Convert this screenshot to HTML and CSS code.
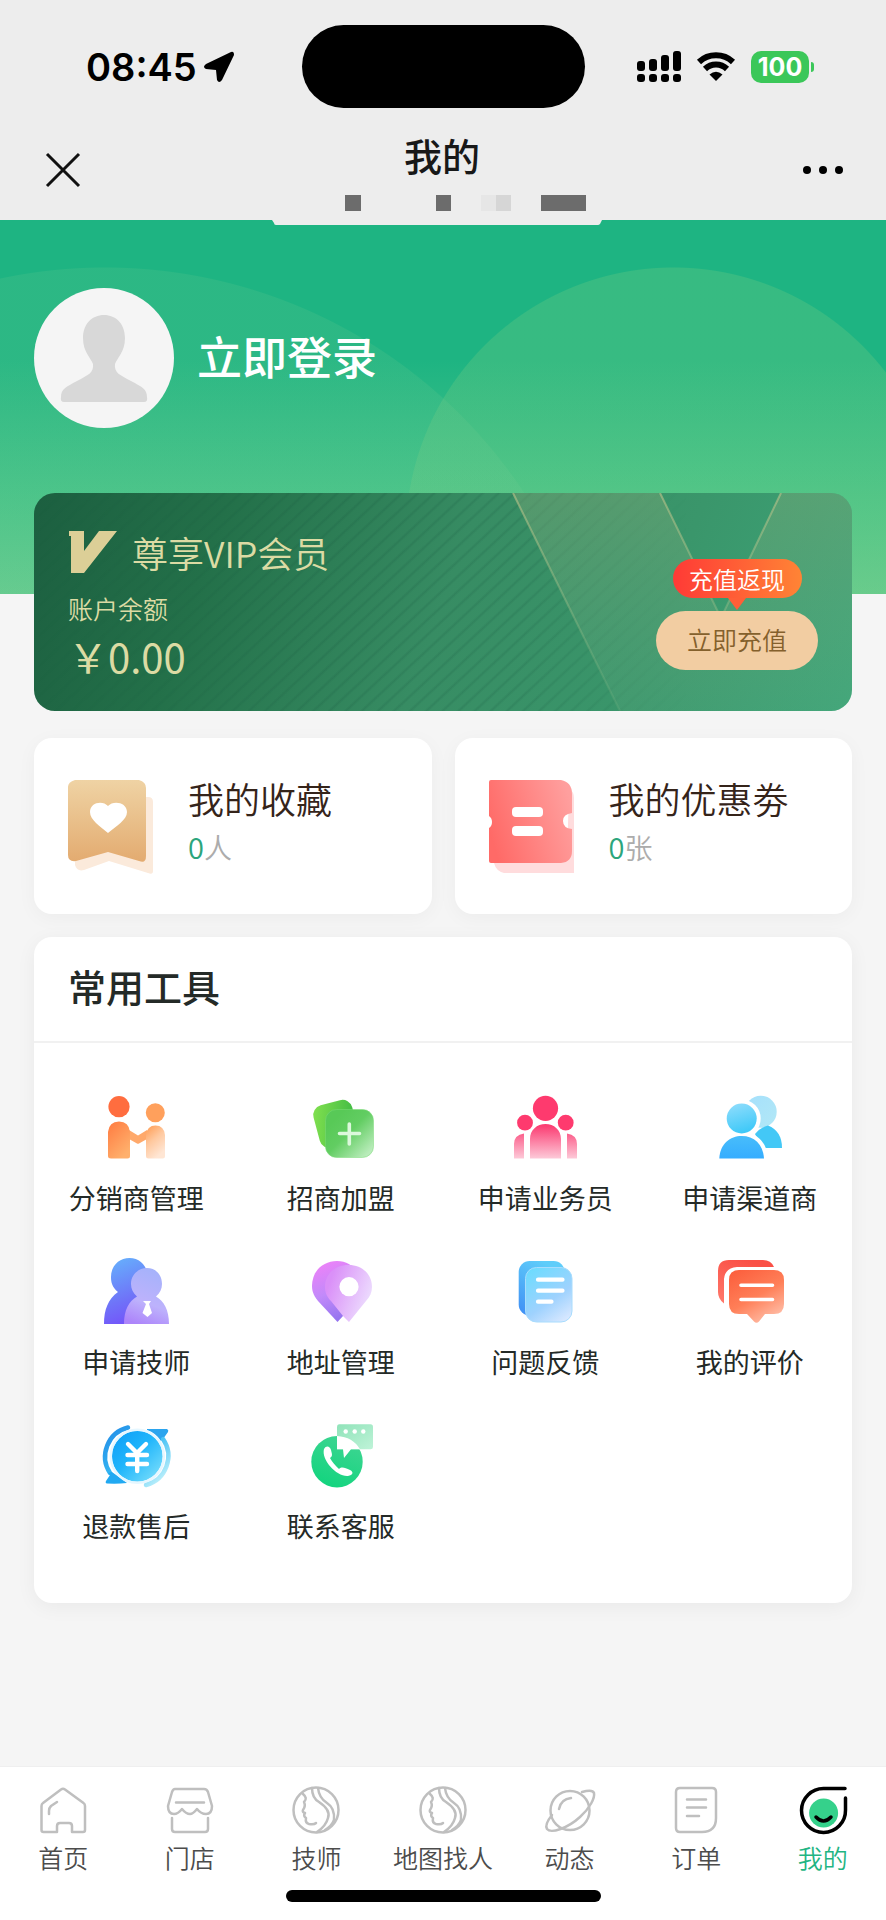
FILE: index.html
```html
<!DOCTYPE html>
<html lang="zh-CN">
<head>
    <meta charset="UTF-8">
    <meta name="viewport" content="width=device-width, initial-scale=1.0">
    <title>我的</title>
    <link rel="stylesheet" href="styles.css">
</head>
<body>
    <header class="topbar">
        <div class="status">
            <div class="status-left">
                <span class="time">08:45</span>
                <svg class="locate" width="30" height="30" viewBox="0 0 30 30"><path d="M27 0 L2 12 Q-2 15 2 17 L12 18 L13 28 Q15 32 18 28 L30 3 Q30 -1 27 0Z"/></svg>
            </div>
            <div class="island"></div>
            <div class="status-right">
                <svg width="44" height="32" viewBox="0 0 44 32">
                    <rect x="0" y="10" width="8" height="10" rx="3"/>
                    <rect x="12" y="8" width="8" height="12" rx="3"/>
                    <rect x="24" y="4" width="8" height="16" rx="3"/>
                    <rect x="36" y="0" width="8" height="20" rx="3"/>
                    <rect x="0" y="23" width="8" height="8" rx="3"/>
                    <rect x="12" y="23" width="8" height="8" rx="3"/>
                    <rect x="24" y="23" width="8" height="8" rx="3"/>
                    <rect x="36" y="23" width="8" height="8" rx="3"/>
                </svg>
                <svg width="40" height="30" viewBox="0 0 40 30">
                    <path d="M3 10 A25 25 0 0 1 37 10" fill="none" stroke="#000" stroke-width="6"/>
                    <path d="M9 17 A16 16 0 0 1 31 17" fill="none" stroke="#000" stroke-width="6"/>
                    <path d="M20 29 L13.500 22.500 Q20 17 26.500 22.500Z"/>
                </svg>
                <div class="battery">100</div>
            </div>
        </div>
        <nav class="nav">
            <button class="nav-btn" aria-label="关闭">
                <svg width="36" height="36" viewBox="0 0 36 36"><path d="M2 2 L34 34 M34 2 L2 34" stroke="#111" stroke-width="3"/></svg>
            </button>
            <h1>我的</h1>
            <button class="nav-btn" aria-label="更多">
                <svg width="40" height="36" viewBox="0 0 40 36"><circle cx="4" cy="18" r="4"/><circle cx="20" cy="18" r="4"/><circle cx="36" cy="18" r="4"/></svg>
            </button>
        </nav>
        <svg class="domain" width="330" height="30" viewBox="0 0 330 30">
            <path d="M0 25 H330 L328 29 Q327 30 326 30 H4 Q2 30 2 28Z" fill="#ededed"/>
            <rect x="73" y="0" width="16" height="16" fill="#6c6c6c"/>
            <rect x="164" y="0" width="15" height="16" fill="#6c6c6c"/>
            <rect x="209" y="0" width="15" height="16" fill="#e6e6e6"/>
            <rect x="224" y="0" width="15" height="16" fill="#d6d6d6"/>
            <rect x="269" y="0" width="45" height="16" fill="#6c6c6c"/>
        </svg>
    </header>

    <section class="hero">
        <a href="#" class="user">
            <svg class="avatar" width="140" height="140" viewBox="0 0 140 140">
                <circle cx="70" cy="70" r="70" fill="#f5f5f5"/>
                <path d="M70 27 C82 27 91 36 91 50 C91 64 83 70 81 76 C80 85 86 87 97 93 C108 99 113 101 113 109 Q114 114 110 114 H30 Q26 114 27 109 C27 101 32 99 43 93 C54 87 60 85 59 76 C57 70 49 64 49 50 C49 36 58 27 70 27Z" fill="#d8d8d8"/>
            </svg>
            <span>立即登录</span>
        </a>
    </section>

    <main>
        <section class="vip">
            <svg class="vip-bg" viewBox="0 0 818 218" preserveAspectRatio="none">
                <defs>
                    <linearGradient id="band" x1="0" y1="0" x2="0" y2="1">
                        <stop offset="0" stop-color="#7fa878" stop-opacity=".42"/>
                        <stop offset="1" stop-color="#6fb088" stop-opacity=".16"/>
                    </linearGradient>
                    <linearGradient id="edge" x1="0" y1="0" x2="0" y2="1">
                        <stop offset="0" stop-color="#b5c088" stop-opacity=".65"/>
                        <stop offset="1" stop-color="#8fbf8c" stop-opacity=".15"/>
                    </linearGradient>
                </defs>
                <path d="M479 0 H626 L687 125 L747 0 H818 V218 H586Z" fill="url(#band)"/>
                <path d="M479 0 L586 218 M626 0 L687 125 M747 0 L687 125" fill="none" stroke="url(#edge)" stroke-width="2"/>
            </svg>
            <div class="vip-info">
                <h2>
                    <svg width="50" height="42" viewBox="0 0 50 42"><path d="M1 0 H16 V20 L31 0 H49 L16 42 H3 V5 H1Z" fill="#dccf97"/></svg>
                    尊享VIP会员
                </h2>
                <p class="vip-label">账户余额</p>
                <p class="vip-money">￥0.00</p>
            </div>
            <div class="vip-action">
                <span class="tip">充值返现</span>
                <button class="recharge">立即充值</button>
            </div>
        </section>

        <section class="cards">
            <a href="#" class="card">
                <svg width="88" height="96" viewBox="0 0 88 96">
                    <defs><linearGradient id="fav" x1="0" y1="0" x2="0" y2="1"><stop offset="0" stop-color="#efd3a4"/><stop offset="1" stop-color="#e3ab70"/></linearGradient></defs>
                    <path d="M6 17 H80 Q85 17 85 22 V91 Q85 95 80 93 L41 81 L16 90 Q9 92 7 85Z" fill="#fbeadb"/>
                    <path d="M7 0 H71 Q78 2 78 8 V76 Q78 84 71 81 L40 72 L8 81 Q0 82 0 75 V7 Q0 2 7 0Z" fill="url(#fav)"/>
                    <path d="M40 53 C32 46 22 40 22 32 C22 22 35 20 40 26 C45 20 59 22 59 32 C59 40 48 46 40 53Z" fill="#fff"/>
                </svg>
                <div>
                    <h3>我的收藏</h3>
                    <p><em>0</em>人</p>
                </div>
            </a>
            <a href="#" class="card">
                <svg width="88" height="96" viewBox="0 0 88 96">
                    <defs><linearGradient id="cou" x1="0" y1=".6" x2="1" y2=".3"><stop offset="0" stop-color="#ff6a67"/><stop offset="1" stop-color="#ff9f9e"/></linearGradient></defs>
                    <path d="M5 80 H78 L80 8 Q85 12 85 18 V93 H15 Q7 91 5 83Z" fill="#ffdcdd"/>
                    <path d="M2 0 H72 Q83 2 83 14 V33 Q74 34 74 41 Q74 48 83 49 V71 Q83 82 72 83 H2 Q0 83 0 81 V48 Q3 46 3 42 Q3 38 0 36 V2 Q0 0 2 0Z" fill="url(#cou)"/>
                    <rect x="23" y="27" width="31" height="10" rx="4" fill="#fff"/>
                    <rect x="23" y="46" width="31" height="10" rx="4" fill="#fff"/>
                </svg>
                <div>
                    <h3>我的优惠劵</h3>
                    <p><em>0</em>张</p>
                </div>
            </a>
        </section>

        <section class="tools">
            <h2>常用工具</h2>
            <div class="tool-grid">
                <a href="#" class="tool">
                    <svg viewBox="0 0 66 66">
                        <defs>
                            <linearGradient id="a1" x1="0" y1="0" x2=".6" y2="1"><stop offset="0" stop-color="#ff7a40"/><stop offset="1" stop-color="#ffb06c"/></linearGradient>
                            <linearGradient id="a2" x1="0" y1="0" x2=".5" y2="1"><stop offset="0" stop-color="#ff9a50"/><stop offset=".5" stop-color="#ffc89e"/><stop offset="1" stop-color="#ffe6d4"/></linearGradient>
                        </defs>
                        <circle cx="16" cy="12.700" r="10.600" fill="#ff6d3f"/>
                        <circle cx="52.300" cy="18.700" r="9.500" fill="#ffa05c"/>
                        <path d="M26 36 L35 41.500 L44 36 V45 L36 49.500 Q35 50 34 49.500 L26 45Z" fill="#ffa96b"/>
                        <path d="M5 38 Q6 27.500 16 27.500 Q26 27.500 27 38 V62 Q27 64.500 24.500 64.500 H8 Q5 64.500 5 62Z" fill="url(#a1)"/>
                        <path d="M43 41 Q44 31.500 52.500 31.500 Q61 31.500 62 41 V62 Q62 64.500 59.500 64.500 H45.500 Q43 64.500 43 62Z" fill="url(#a2)"/>
                    </svg>
                    <span>分销商管理</span>
                </a>
                <a href="#" class="tool">
                    <svg viewBox="0 0 66 66">
                        <defs>
                            <linearGradient id="b1" x1="0" y1=".2" x2="1" y2=".6"><stop offset="0" stop-color="#7fdf4e"/><stop offset="1" stop-color="#3eb944"/></linearGradient>
                            <linearGradient id="b2" x1=".2" y1=".2" x2=".9" y2=".9"><stop offset="0" stop-color="#58c957"/><stop offset=".4" stop-color="#62cd62"/><stop offset="1" stop-color="#b9ecba"/></linearGradient>
                        </defs>
                        <rect x="8" y="8" width="40" height="44" rx="10" transform="rotate(-15 28 30)" fill="url(#b1)"/>
                        <rect x="17.500" y="15.500" width="48" height="48" rx="11" fill="url(#b2)" stroke="#7bdc78" stroke-opacity=".5"/>
                        <path d="M41.300 30 V50 M31.500 39.500 H51.500" stroke="#dcf8dc" stroke-width="3.600" stroke-linecap="round"/>
                    </svg>
                    <span>招商加盟</span>
                </a>
                <a href="#" class="tool">
                    <svg viewBox="0 0 66 66">
                        <defs><linearGradient id="c1" gradientUnits="userSpaceOnUse" x1="0" y1="32" x2="0" y2="66"><stop offset="0" stop-color="#fb3f74"/><stop offset="1" stop-color="#fdd0dd"/></linearGradient></defs>
                        <g fill="#fe3a6e"><circle cx="33.500" cy="14.300" r="12.600"/><circle cx="13" cy="28.700" r="7.900"/><circle cx="53.700" cy="28.700" r="7.900"/></g>
                        <path d="M18 64.500 V45 C18 36 25 30 33.500 30 C42 30 49 36 49 45 V64.500Z M2 64.500 V50 Q2 41 12 39.500 V64.500Z M55 64.500 V39.500 Q65 41 65 50 V64.500Z" fill="url(#c1)"/>
                    </svg>
                    <span>申请业务员</span>
                </a>
                <a href="#" class="tool">
                    <svg viewBox="0 0 66 66">
                        <defs>
                            <linearGradient id="d1" x1=".3" y1="0" x2=".6" y2="1"><stop offset="0" stop-color="#8cdcfc"/><stop offset="1" stop-color="#3bc8f8"/></linearGradient>
                            <linearGradient id="d2" x1="0" y1="0" x2="0" y2="1"><stop offset="0" stop-color="#48bdfb"/><stop offset="1" stop-color="#35adff"/></linearGradient>
                            <linearGradient id="d3" x1="0" y1="0" x2="1" y2="1"><stop offset="0" stop-color="#a5e0fc"/><stop offset="1" stop-color="#b2e8f6"/></linearGradient>
                        </defs>
                        <circle cx="43.700" cy="17.700" r="16" fill="url(#d3)"/>
                        <path d="M38 40 Q44 33 51 31.500 Q65 37 65 54 H45Z" fill="#43c8f6"/>
                        <g fill="#fff" stroke="#fff" stroke-width="8"><circle cx="24.700" cy="24.500" r="15"/><path d="M2.300 64.500 C3 50 13 42 24.700 42 C37 42 46 50 47 64.500Z"/></g>
                        <circle cx="24.700" cy="24.500" r="15" fill="url(#d1)"/>
                        <path d="M2.300 64.500 C3 50 13 42 24.700 42 C37 42 46 50 47 64.500Z" fill="url(#d2)"/>
                    </svg>
                    <span>申请渠道商</span>
                </a>
                <a href="#" class="tool">
                    <svg viewBox="0 0 66 66">
                        <defs>
                            <linearGradient id="e1" x1=".3" y1="0" x2=".6" y2="1"><stop offset="0" stop-color="#66aefc"/><stop offset=".6" stop-color="#6f74f8"/><stop offset="1" stop-color="#7450fa"/></linearGradient>
                            <linearGradient id="e2" x1=".6" y1="0" x2=".3" y2="1"><stop offset="0" stop-color="#a5b2fb"/><stop offset=".6" stop-color="#bdb2fc"/><stop offset="1" stop-color="#ad85fa"/></linearGradient>
                        </defs>
                        <path d="M1 66 C1 52 5 41 15 34 C9 29 8 24 8 19 C8 8 16 0 26.500 0 C37 0 44 8 45 18 L50 66Z" fill="url(#e1)"/>
                        <path d="M21 66 C21 52 26 43 34 38.500 C30 35 28 31 28 26 C28 17 35 10 44 10 C53 10 59 17 59 26 C59 31 57 35 53 38.500 C61 43 66 52 66 66Z" fill="url(#e2)"/>
                        <path d="M40 43 H48 L46 46 L49 55 L44.500 59 L39.500 55 L43 46Z" fill="#fff"/>
                    </svg>
                    <span>申请技师</span>
                </a>
                <a href="#" class="tool">
                    <svg viewBox="0 0 66 66">
                        <defs>
                            <linearGradient id="f1" x1=".3" y1="0" x2=".6" y2="1"><stop offset="0" stop-color="#ec82f8"/><stop offset=".5" stop-color="#c28afa"/><stop offset="1" stop-color="#9172ee"/></linearGradient>
                            <linearGradient id="f2" x1=".1" y1=".3" x2="1" y2=".7"><stop offset="0" stop-color="#da90f8"/><stop offset="1" stop-color="#eee2fe"/></linearGradient>
                        </defs>
                        <path d="M29.500 64 L10 43 C5 37 4 32 4 28 C4 13 15 3 29 3 C39 3 46 8 50 16 L35 58Z" fill="url(#f1)"/>
                        <path d="M41 64 L35 58 L23 43 C18 38 17 33 17 29 C17 16 27 7 40.500 7 C54 7 64 16 64 29 C64 34 62 39 58 43Z" fill="url(#f2)"/>
                        <circle cx="41" cy="28.700" r="9.600" fill="#fff"/>
                    </svg>
                    <span>地址管理</span>
                </a>
                <a href="#" class="tool">
                    <svg viewBox="0 0 66 66">
                        <defs>
                            <linearGradient id="g1" x1=".5" y1="0" x2="0" y2="1"><stop offset="0" stop-color="#5fcdfa"/><stop offset="1" stop-color="#3f8df4"/></linearGradient>
                            <linearGradient id="g2" x1=".2" y1="0" x2=".8" y2="1"><stop offset="0" stop-color="#6edbfe"/><stop offset=".6" stop-color="#9fd2fe"/><stop offset="1" stop-color="#d8e8ff"/></linearGradient>
                        </defs>
                        <rect x="6.700" y="3" width="46" height="54.500" rx="11" fill="url(#g1)"/>
                        <rect x="13.500" y="9.500" width="46.500" height="54.500" rx="11" fill="url(#g2)" stroke="#a8dcfd"/>
                        <path d="M26 21.700 H50.500 M26 32.700 H50.500 M26 43.700 H39.500" stroke="#fff" stroke-width="4.200" stroke-linecap="round"/>
                    </svg>
                    <span>问题反馈</span>
                </a>
                <a href="#" class="tool">
                    <svg viewBox="0 0 66 66">
                        <defs><linearGradient id="h1" x1=".2" y1="0" x2=".8" y2="1"><stop offset="0" stop-color="#fc613f"/><stop offset=".5" stop-color="#ff7f58"/><stop offset="1" stop-color="#ffc3ae"/></linearGradient>
                        <linearGradient id="h2" x1=".5" y1="0" x2="0" y2="1"><stop offset="0" stop-color="#fa5046"/><stop offset="1" stop-color="#ff7a6c"/></linearGradient></defs>
                        <path d="M7 45.500 Q1 41 1 34 V13 Q1 2 12 2 H46 Q54 2 57 9 H20 Q8 10 7 21Z" fill="url(#h2)"/>
                        <path d="M22 12 H57 Q67 12 67 22 V46 Q67 56 57 56 H48 L42 63.500 Q39.500 66 37 63.500 L30 56 H22 Q12 56 12 46 V22 Q12 12 22 12Z" fill="url(#h1)"/>
                        <path d="M24 27.300 H55.500 M24 41.500 H55.500" stroke="#fff" stroke-width="3.600" stroke-linecap="round"/>
                    </svg>
                    <span>我的评价</span>
                </a>
                <a href="#" class="tool">
                    <svg viewBox="0 0 66 66">
                        <defs><linearGradient id="i1" x1="0" y1="0" x2="1" y2="1"><stop offset="0" stop-color="#0c9cf6"/><stop offset=".45" stop-color="#1fb5fb"/><stop offset="1" stop-color="#86e4fb"/></linearGradient>
                        <linearGradient id="i2" gradientUnits="userSpaceOnUse" x1="10" y1="5" x2="60" y2="60"><stop offset="0" stop-color="#2490e8"/><stop offset=".5" stop-color="#38bcf4"/><stop offset="1" stop-color="#c2f2fb"/></linearGradient></defs>
                        <path d="M25 5.500 A30 30 0 0 0 7 51" fill="none" stroke="url(#i2)" stroke-width="4.500" stroke-linecap="round"/>
                        <path d="M5 51 L9 50 L24 61 Q15 62 4 61.500 Q2 61 3 59 L7 53Z" fill="#21a9f2"/>
                        <path d="M44 7 L64 7 Q66 8 65 10 L60 17 L58 19 Q53 11 44 8Z" fill="#2ba4ee"/>
                        <path d="M60 17 A30 30 0 0 1 43 63" fill="none" stroke="url(#i2)" stroke-width="4.500" stroke-linecap="round"/>
                        <circle cx="34.300" cy="34.300" r="25.500" fill="url(#i1)"/>
                        <circle cx="34.300" cy="34.300" r="26.500" fill="none" stroke="#e6f7ff" stroke-width="2.500"/>
                        <path d="M25 22 L34 31 L43 22 M24.500 33 H44 M24.500 42 H44 M34.200 32 V49" fill="none" stroke="#fff" stroke-width="4.400" stroke-linecap="round"/>
                    </svg>
                    <span>退款售后</span>
                </a>
                <a href="#" class="tool">
                    <svg viewBox="0 0 66 66">
                        <defs><linearGradient id="j1" x1=".7" y1="0" x2=".3" y2="1"><stop offset="0" stop-color="#3fd592"/><stop offset="1" stop-color="#12d47e"/></linearGradient>
                        <linearGradient id="j2" x1="0" y1="0" x2="1" y2="1"><stop offset="0" stop-color="#8fe3b9"/><stop offset="1" stop-color="#bff3d8"/></linearGradient></defs>
                        <circle cx="29" cy="39.700" r="25.700" fill="url(#j1)"/>
                        <path d="M31 2.300 H62.500 Q65 2.300 65 5 V25 Q65 27.300 62.500 27.300 H29 V5 Q29 2.300 31 2.300Z" fill="url(#j2)"/>
                        <path d="M29 14 Q45 15 52 27.300 H43 L36 36 L35 27.300 H29Z" fill="#fff"/>
                        <g fill="#fff"><circle cx="37.700" cy="9.500" r="2.200"/><circle cx="46.700" cy="9.500" r="2.200"/><circle cx="55.300" cy="9.500" r="2.200"/></g>
                        <path d="M16 27 C18 23 22 24 23 28 C24 32 25 34 22 36 C24 40 27 43 31 47 C34 44 37 46 42 48 C46 50 45 53 40 54 C29 55 13 38 16 27Z" fill="#fff"/>
                    </svg>
                    <span>联系客服</span>
                </a>
            </div>
        </section>
    </main>

    <footer class="tabbar">
        <nav class="tabs">
            <a href="#" class="tab">
                <svg viewBox="0 0 48 48"><path d="M2.500 20 Q2.500 18 4 17 L22 3.500 Q24 2 26 3.500 L44.500 17 Q46 18 46 20 V44 Q46 46 44 46 H33 V40 Q33 37 30 37 H21 Q18 37 18 40 V46 H4.500 Q2.500 46 2.500 44Z M18 16 L12 20 Q10 22 10 25 V28"/></svg>
                <span>首页</span>
            </a>
            <a href="#" class="tab">
                <svg viewBox="0 0 48 48"><path d="M9 3 H38 Q41 3 42 6 L46 20 Q46 28 40 28 Q35 28 31 23 Q27 28 24 28 Q20 28 16 23 Q12 28 8 28 Q2 28 2 20 L6 6 Q7 3 9 3Z M10 16.500 H38 M6 32 V43 Q6 46 9 46 H39 Q42 46 42 43 V32"/></svg>
                <span>门店</span>
            </a>
            <a href="#" class="tab">
                <svg viewBox="0 0 48 48"><circle cx="24" cy="24" r="22.500"/><path d="M11 8 Q16 12 12 16 Q14 20 11 24 Q10 26 13 27 Q11 30 14 32 Q13 37 17 38 Q22 39 24 37 M20 2 Q20 12 27 16 Q39 24 36 32 Q34 40 25 46 M26 2 Q27 12 35 17 Q43 22 42 34 Q40 40 33 44"/></svg>
                <span>技师</span>
            </a>
            <a href="#" class="tab">
                <svg viewBox="0 0 48 48"><circle cx="24" cy="24" r="22.500"/><path d="M11 8 Q16 12 12 16 Q14 20 11 24 Q10 26 13 27 Q11 30 14 32 Q13 37 17 38 Q22 39 24 37 M20 2 Q20 12 27 16 Q39 24 36 32 Q34 40 25 46 M26 2 Q27 12 35 17 Q43 22 42 34 Q40 40 33 44"/></svg>
                <span>地图找人</span>
            </a>
            <a href="#" class="tab">
                <svg viewBox="0 0 48 48"><circle cx="24" cy="24.500" r="19.500"/><path d="M36 6 C43 4 47 4 48 7 C49 12 44 22 34 31 C22 42 5 48 1 43 C-1 40 2 34 6 29 M13 23 Q15 13 25 12"/></svg>
                <span>动态</span>
            </a>
            <a href="#" class="tab">
                <svg viewBox="0 0 48 48"><path d="M8 2 H40 Q44 2 44 6 V32 Q44 46 30 46 H8 Q4 46 4 42 V6 Q4 2 8 2Z M15 13.500 H34 M15 21.500 H34 M15 30 H27"/></svg>
                <span>订单</span>
            </a>
            <a href="#" class="tab active">
                <svg viewBox="0 0 48 48"><circle class="face" cx="24.600" cy="27" r="14.500"/><path class="ring" d="M46 2.500 H25 A22 22 0 1 0 46.500 24 V12 M17 31 Q24.500 39 32 31"/></svg>
                <span>我的</span>
            </a>
        </nav>
        <div class="home-bar"></div>
    </footer>
</body>
</html>
```
FILE: styles.css
```css
* {
    box-sizing: border-box;
    margin: 0;
    padding: 0;
}
body {
    font-family: "Noto Sans CJK SC", "Noto Sans", sans-serif;
    font-weight: 350;
    background-color: #f5f5f5;
    color: #242a27;
    min-height: 100vh;
    display: flex;
    flex-direction: column;
}
a {
    color: inherit;
    text-decoration: none;
}
button {
    font-family: inherit;
    border: none;
    cursor: pointer;
}
svg {
    display: block;
    flex: none;
    overflow: visible;
}

/* 顶部状态栏 */
.topbar {
    position: relative;
    height: 220px;
    background-color: #ededed;
}
.status {
    display: grid;
    grid-template-columns: 1fr 283px 1fr;
    align-items: center;
    padding-top: 25px;
}
.status-left {
    display: flex;
    align-items: center;
    gap: 7px;
    padding-left: 86px;
}
.time {
    font-family: Inter, sans-serif;
    font-size: 38px;
    font-weight: 600;
    line-height: 44px;
    color: #000;
}
.island {
    height: 83px;
    border-radius: 42px;
    background-color: #000;
}
.status-right {
    display: flex;
    align-items: center;
    justify-content: flex-end;
    gap: 15px;
    padding-right: 77px;
}
.battery {
    position: relative;
    width: 58px;
    height: 32px;
    border-radius: 10px;
    background-color: #3bc759;
    color: #fff;
    font-family: Inter, sans-serif;
    font-size: 25px;
    font-weight: 700;
    line-height: 32px;
    text-align: center;
}
.battery::after {
    content: "";
    position: absolute;
    right: -5px;
    top: 11px;
    width: 3px;
    height: 10px;
    border-radius: 0 3px 3px 0;
    background-color: #3bc759;
}
.nav {
    display: flex;
    justify-content: space-between;
    align-items: flex-end;
    padding: 20px 43px 0 45px;
}
.nav h1 {
    font-size: 38px;
    font-weight: 500;
    line-height: 54px;
    color: #181818;
    padding-bottom: 6px;
}
.nav-btn {
    background: none;
}
.domain {
    position: absolute;
    left: 50%;
    top: 195px;
    margin-left: -171px;
    z-index: 1;
}

/* 登录区域 */
.hero {
    height: 374px;
    padding: 68px 34px 0;
    background:
        radial-gradient(circle 503px at 105px 550px, rgba(120, 205, 145, 0.16) 502px, transparent 503px),
        radial-gradient(circle 268px at 76% 315px, rgba(120, 205, 130, 0.28) 267px, transparent 268px),
        linear-gradient(#1eb482 0, #1eb482 140px, #43c288 270px, #63cb8f 374px);
}
.user {
    display: flex;
    align-items: center;
    gap: 23px;
    color: #fff;
    font-size: 45px;
    font-weight: 500;
}
.user span {
    padding-bottom: 5px;
}

main {
    flex: 1;
    padding: 0 34px;
    margin-top: -101px;
}

/* 会员卡 */
.vip {
    position: relative;
    display: flex;
    justify-content: space-between;
    height: 218px;
    padding: 35px 34px 0;
    border-radius: 21px;
    overflow: hidden;
    background: linear-gradient(110deg, #1c5f40 0, #237049 22%, #378c63 50%, #3a966b 75%, #3ca578 100%);
}
.vip::before {
    content: "";
    position: absolute;
    inset: 0;
    background: repeating-linear-gradient(137deg, transparent 0, transparent 7px, rgba(20, 80, 60, 0.16) 9px, transparent 11px);
    mask-image: linear-gradient(90deg, transparent, #000 35%, #000 60%, transparent 80%);
}
.vip-bg {
    position: absolute;
    left: 0;
    top: 0;
    width: 100%;
    height: 100%;
}
.vip-info,
.vip-action {
    position: relative;
}
.vip-info {
    color: #dcdba4;
}
.vip-info h2 {
    display: flex;
    align-items: center;
    gap: 14px;
    font-size: 36px;
    font-weight: 350;
    line-height: 48px;
}
.vip-label {
    font-size: 25px;
    line-height: 36px;
    margin-top: 14px;
}
.vip-money {
    font-size: 40px;
    font-weight: 400;
    line-height: 60px;
}
.vip-action {
    display: flex;
    flex-direction: column;
    align-items: center;
    padding-top: 31px;
}
.tip {
    position: relative;
    width: 129px;
    border-radius: 20px;
    background: linear-gradient(90deg, #ff3a36, #ff8435);
    color: #fff;
    font-size: 24px;
    line-height: 39px;
    text-align: center;
    margin-bottom: 13px;
}
.tip::after {
    content: "";
    position: absolute;
    left: 50%;
    top: 39px;
    margin-left: -9px;
    border: 9px solid transparent;
    border-top: 12px solid #ff5f37;
    border-bottom: 0;
}
.recharge {
    width: 162px;
    height: 59px;
    padding-bottom: 4px;
    border-radius: 30px;
    background-color: #f2cda2;
    color: #84602c;
    font-size: 25px;
    font-weight: 350;
}

/* 收藏和优惠券 */
.cards {
    display: grid;
    grid-template-columns: 1fr 1fr;
    gap: 23px;
    margin-top: 27px;
}
.card {
    display: flex;
    gap: 32px;
    height: 176px;
    padding: 42px 34px;
    border-radius: 18px;
    background-color: #fff;
    box-shadow: 0 4px 20px rgba(0, 0, 0, 0.04);
}
.card h3 {
    font-size: 36px;
    font-weight: 350;
    line-height: 36px;
    color: #35241a;
    white-space: nowrap;
}
.card p {
    font-size: 28px;
    line-height: 40px;
    margin-top: 10px;
    color: #acacac;
}
.card em {
    font-style: normal;
    font-size: 29px;
    color: #2ca57c;
}

/* 常用工具 */
.tools {
    margin-top: 23px;
    border-radius: 18px;
    background-color: #fff;
    box-shadow: 0 4px 20px rgba(0, 0, 0, 0.05);
}
.tools h2 {
    padding: 0 34px 6px;
    border-bottom: 2px solid #f1f1f1;
    font-size: 38px;
    font-weight: 500;
    line-height: 98px;
}
.tool-grid {
    display: grid;
    grid-template-columns: repeat(4, 1fr);
    row-gap: 40px;
    padding: 51px 0 57px;
}
.tool {
    display: flex;
    flex-direction: column;
    align-items: center;
    gap: 18px;
    font-size: 27px;
    font-weight: 400;
    line-height: 40px;
}
.tool svg {
    width: 66px;
    height: 66px;
}

/* 底部导航 */
.tabbar {
    height: 154px;
    padding-top: 19px;
    background-color: #fff;
    border-top: 1px solid #efefef;
}
.tabs {
    display: grid;
    grid-template-columns: repeat(7, 1fr);
}
.tab {
    display: flex;
    flex-direction: column;
    align-items: center;
    gap: 5px;
    font-size: 25px;
    line-height: 36px;
    color: #4c4c4c;
    white-space: nowrap;
}
.tab svg {
    width: 48px;
    height: 48px;
    fill: none;
    stroke: #bfbfbf;
    stroke-width: 2.5;
    stroke-linecap: round;
    stroke-linejoin: round;
}
.tab.active {
    color: #1fb583;
}
.tab .face {
    fill: #35d18b;
    stroke: none;
}
.tab .ring {
    stroke: #000;
    stroke-width: 3.5;
}
.home-bar {
    width: 315px;
    height: 12px;
    margin: 15px auto 0;
    border-radius: 6px;
    background-color: #000;
}
```
